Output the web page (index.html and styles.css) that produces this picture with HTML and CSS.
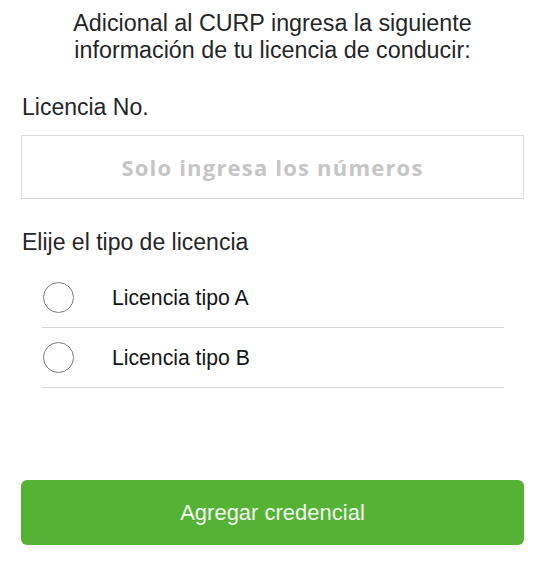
FILE: index.html
```html
<!DOCTYPE html>
<html lang="es">
<head>
<meta charset="utf-8">
<title>Licencia</title>
<link rel="stylesheet" href="styles.css">
</head>
<body>
<main class="page">
  <p class="intro">Adicional al CURP ingresa la siguiente<br>información de tu licencia de conducir:</p>
  <label class="label label-no" for="lic">Licencia No.</label>
  <input class="field" id="lic" type="text" placeholder="Solo ingresa los números">
  <p class="label label-tipo">Elije el tipo de licencia</p>
  <ul class="options">
    <li class="option"><span class="radio"></span><span class="option-text">Licencia tipo A</span></li>
    <li class="option"><span class="radio"></span><span class="option-text">Licencia tipo B</span></li>
  </ul>
  <button class="submit" type="button">Agregar credencial</button>
</main>
</body>
</html>
```

FILE: styles.css
```css
html, body {
  margin: 0;
  padding: 0;
  background: #ffffff;
}

body {
  font-family: "Liberation Sans", Arial, sans-serif;
  color: #222222;
}

.page {
  display: flex;
  flex-direction: column;
  padding: 10px 21px 0 21px;
}

.intro {
  margin: 0;
  text-align: center;
  font-size: 23.3px;
  line-height: 27px;
  color: #262626;
}

.label {
  display: block;
  margin: 0;
  font-size: 23px;
  line-height: 27px;
  color: #262626;
  padding-left: 1px;
}

.label-no {
  margin-top: 29.5px;
}

.field {
  box-sizing: border-box;
  margin: 14.5px 0 0 0;
  height: 64px;
  width: 100%;
  border: 1px solid #dcdcdc;
  border-radius: 0;
  outline: none;
  background: #ffffff;
  text-align: center;
  font-family: "Open Sans", "Liberation Sans", sans-serif;
  font-weight: 700;
  font-size: 22px;
  letter-spacing: 1.2px;
  color: #222222;
  padding: 0 10px;
}

.field::placeholder {
  color: #c5c5c5;
  opacity: 1;
}

.label-tipo {
  margin-top: 29.5px;
}

.options {
  list-style: none;
  margin: 12.5px 20px 0 21px;
  padding: 0;
}

.option {
  display: flex;
  align-items: center;
  height: 59px;
  border-bottom: 1px solid #d8d8d8;
}

.radio {
  box-sizing: border-box;
  flex: none;
  width: 31px;
  height: 31px;
  margin-left: 1px;
  border: 1.5px solid #7e7e7e;
  border-radius: 50%;
}

.option-text {
  margin-left: 38px;
  font-size: 21.2px;
  color: #161616;
}

.submit {
  margin-top: 92px;
  height: 65px;
  width: 100%;
  border: none;
  border-radius: 6px;
  background: #55b234;
  color: #f3faef;
  font-family: "Liberation Sans", Arial, sans-serif;
  font-size: 22px;
  cursor: pointer;
}
```
